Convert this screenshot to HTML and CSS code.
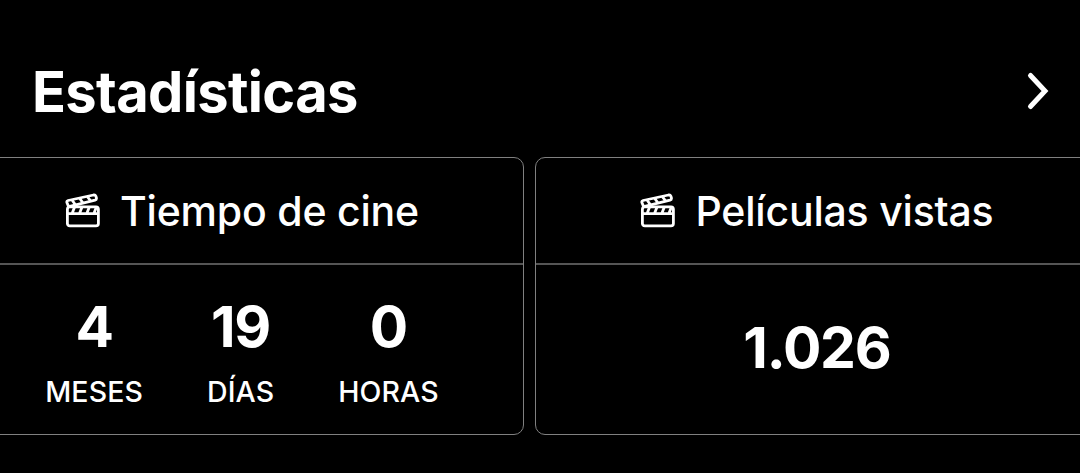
FILE: index.html
```html
<!DOCTYPE html>
<html lang="es">
<head>
    <meta charset="UTF-8">
    <meta name="viewport" content="width=device-width, initial-scale=1.0">
    <title>Estadísticas</title>
    <link rel="stylesheet" href="styles.css">
</head>
<body>
    <header class="section-header">
        <h1>Estadísticas</h1>
        <svg class="chevron" viewBox="0 0 24 40" fill="none" stroke="#fff" stroke-width="5" stroke-linecap="round" stroke-linejoin="miter">
            <path d="M4.5 4.5 L19 20 L4.5 35.5"/>
        </svg>
    </header>

    <main class="cards">
        <section class="card">
            <h2 class="card-title">
                <svg class="clapper" viewBox="0 0 36 36" fill="none" stroke="#fff" stroke-width="2.8" stroke-linejoin="round">
                    <rect x="2.4" y="13.9" width="31" height="19" rx="2.4"/>
                    <path d="M2.4 20.6H33.4M9.6 14L7.2 20.3M17 14L14.6 20.3M24.3 14L21.9 20.3M31.4 14L29 20.3"/>
                    <path d="M3.5 13.4L1.9 9.5Q1.5 8 3.1 7.5L28.5 2Q30.3 1.7 30.9 3.2L31.4 4.8Q31.7 6.6 30 7.1L4.8 13.4Q3.9 13.7 3.5 13.4Z"/>
                    <path d="M7 7L10.4 11.8M14.6 5.3L18 10M22.3 3.6L25.7 8"/>
                </svg>
                <span>Tiempo de cine</span>
            </h2>
            <div class="card-body">
                <div class="stat">
                    <span class="value">4</span>
                    <span class="label">MESES</span>
                </div>
                <div class="stat">
                    <span class="value">19</span>
                    <span class="label">DÍAS</span>
                </div>
                <div class="stat">
                    <span class="value">0</span>
                    <span class="label">HORAS</span>
                </div>
            </div>
        </section>

        <section class="card">
            <h2 class="card-title">
                <svg class="clapper" viewBox="0 0 36 36" fill="none" stroke="#fff" stroke-width="2.8" stroke-linejoin="round">
                    <rect x="2.4" y="13.9" width="31" height="19" rx="2.4"/>
                    <path d="M2.4 20.6H33.4M9.6 14L7.2 20.3M17 14L14.6 20.3M24.3 14L21.9 20.3M31.4 14L29 20.3"/>
                    <path d="M3.5 13.4L1.9 9.5Q1.5 8 3.1 7.5L28.5 2Q30.3 1.7 30.9 3.2L31.4 4.8Q31.7 6.6 30 7.1L4.8 13.4Q3.9 13.7 3.5 13.4Z"/>
                    <path d="M7 7L10.4 11.8M14.6 5.3L18 10M22.3 3.6L25.7 8"/>
                </svg>
                <span>Películas vistas</span>
            </h2>
            <div class="card-body">
                <span class="value total">1.026</span>
            </div>
        </section>
    </main>
</body>
</html>
```
FILE: styles.css
```css
* {
    box-sizing: border-box;
}

body {
    font-family: Inter, Lato, sans-serif;
    margin: 0;
    background-color: #000;
    color: #fff;
    overflow: hidden;
}

h1,
h2 {
    margin: 0;
}

.section-header {
    display: flex;
    justify-content: space-between;
    align-items: center;
    height: 157px;
    padding: 25px 30px 0 32px;
}

.section-header h1 {
    padding-top: 2px;
    font-size: 56px;
    line-height: 70px;
    font-weight: 700;
    letter-spacing: -0.65px;
}

.chevron {
    width: 24px;
    height: 40px;
}

/* the row runs past both edges of the screen */
.cards {
    display: grid;
    grid-template-columns: 564px 564px;
    gap: 11px;
    margin-left: -40px;
}

.card {
    height: 278px;
    border: 1px solid #808080;
    border-radius: 10px;
}

.card-title {
    display: flex;
    justify-content: center;
    align-items: center;
    gap: 19px;
    height: 107px;
    border-bottom: 2px solid #555;
    font-size: 41px;
    font-weight: 550;
    letter-spacing: -0.2px;
    white-space: nowrap;
}

.clapper {
    width: 36px;
    height: 36px;
}

.card-body {
    display: flex;
    justify-content: center;
    align-items: center;
    gap: 64px;
    height: 169px;
}

.stat {
    display: flex;
    flex-direction: column;
    align-items: center;
    gap: 13px;
    padding-top: 8px;
}

.value {
    font-size: 57px;
    line-height: 64px;
    font-weight: 700;
    letter-spacing: -1.2px;
}

.total {
    padding-bottom: 3px;
}

.label {
    font-size: 28.5px;
    line-height: 40px;
    font-weight: 550;
    letter-spacing: 0.1px;
}
```
